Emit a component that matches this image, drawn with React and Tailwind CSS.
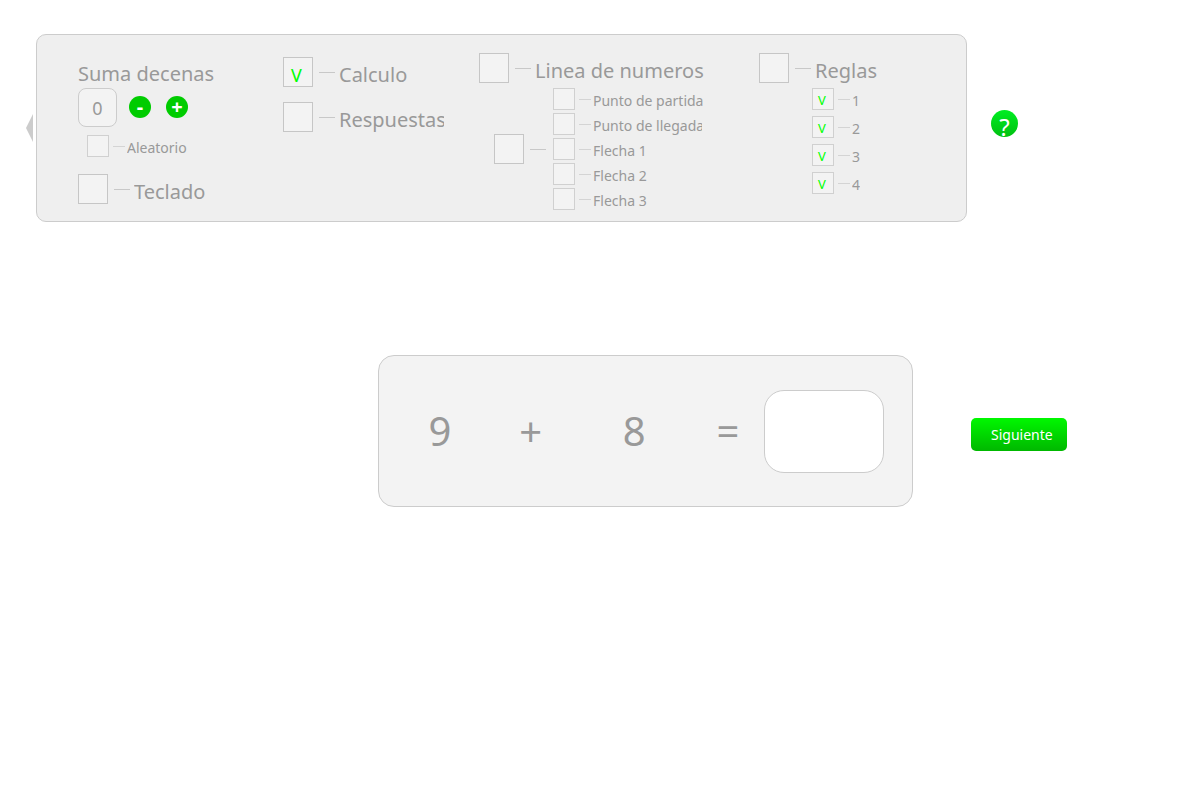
import React, { useState } from "react";

function Option({ label, small = false, checked = false, hideLabel = false, textClass = "" }) {
  const [on, setOn] = useState(checked);
  return (
    <label className={small ? "flex h-[22px] items-center" : "flex h-[30px] items-center"}>
      <span className={small ? "relative h-[22px] w-[22px] shrink-0" : "relative h-[30px] w-[30px] shrink-0"}>
        <input
          type="checkbox"
          aria-label={label}
          checked={on}
          onChange={() => setOn(!on)}
          className={
            small
              ? "block h-full w-full appearance-none border border-[#d0d0d0] bg-[#f3f3f3]"
              : "block h-full w-full appearance-none border border-[#c6c6c6] bg-[#f3f3f3]"
          }
        />
        {on && (
          <span
            aria-hidden="true"
            className={
              small
                ? "pointer-events-none absolute left-[6px] top-1 text-[13px] leading-[16px] text-[#00ff00]"
                : "pointer-events-none absolute left-[8px] top-[8px] text-[18px] leading-[20px] text-[#00ff00]"
            }
          >
            V
          </span>
        )}
      </span>
      <span className={small ? "ml-1 mr-[2px] h-px w-3 shrink-0 bg-[#d4d4d4]" : "ml-[6px] mr-1 h-px w-4 shrink-0 bg-[#c8c8c8]"} />
      {!hideLabel && (
        <span
          className={`${small ? "pt-[3px] text-[14px] leading-5" : "pt-[6px] text-[20px] leading-7"} overflow-hidden whitespace-nowrap ${textClass}`}
        >
          {label}
        </span>
      )}
    </label>
  );
}

function TensPicker() {
  const [tens, setTens] = useState(0);
  const round =
    "flex h-[22px] w-[22px] items-center justify-center rounded-full bg-[#00cc00] text-[20px] font-bold leading-5 text-white";
  return (
    <div className="flex flex-col items-start pt-[25px]">
      <h2 className="text-[20px] leading-7">Suma decenas</h2>
      <div className="flex items-center">
        <output className="flex h-[39px] w-[39px] items-center justify-center rounded-lg border border-[#cccccc] bg-[#f3f3f3] text-[18px] leading-6">
          {tens}
        </output>
        <div className="ml-3 flex gap-[15px] pb-[2px]">
          <button type="button" aria-label="Restar" onClick={() => setTens(Math.max(0, tens - 1))} className={round}>
            -
          </button>
          <button type="button" aria-label="Sumar" onClick={() => setTens(tens + 1)} className={round}>
            +
          </button>
        </div>
      </div>
      <div className="ml-[9px] mt-2">
        <Option small label="Aleatorio" />
      </div>
      <div className="mt-[17px]">
        <Option label="Teclado" />
      </div>
    </div>
  );
}

function Settings() {
  return (
    <header className="flex items-center pl-[26px] pr-[182px]">
      <button type="button" aria-label="Ocultar opciones" className="mr-[3px] shrink-0">
        <svg width="7" height="28" viewBox="0 0 7 28" className="block">
          <path d="M7 0V28L0 14Z" fill="#cccccc" />
        </svg>
      </button>
      <section className="grid min-h-[188px] flex-1 grid-cols-[205px_196px_280px_1fr] rounded-[10px] border border-[#cccccc] bg-[#efefef] pl-[41px]">
        <TensPicker />
        <div className="flex flex-col gap-[15px] pt-[22px]">
          <Option label="Calculo" checked />
          <Option label="Respuestas" textClass="w-[105px]" />
        </div>
        <div className="flex flex-col pt-[18px]">
          <Option label="Linea de numeros" />
          <div className="ml-[15px] mt-[5px] flex items-center">
            <Option label="Todos los pasos" hideLabel />
            <div className="ml-[3px] flex flex-col gap-[3px]">
              <Option small label="Punto de partida" textClass="w-[111px]" />
              <Option small label="Punto de llegada" textClass="w-[109px]" />
              <Option small label="Flecha 1" />
              <Option small label="Flecha 2" />
              <Option small label="Flecha 3" />
            </div>
          </div>
        </div>
        <div className="flex flex-col pt-[18px]">
          <Option label="Reglas" />
          <div className="ml-[53px] mt-[5px] flex flex-col gap-[6px]">
            <Option small label="1" checked />
            <Option small label="2" checked />
            <Option small label="3" checked />
            <Option small label="4" checked />
          </div>
        </div>
      </section>
      <button
        type="button"
        className="mb-[10px] ml-6 flex h-[27px] w-[27px] shrink-0 items-start justify-center overflow-hidden rounded-full bg-linear-to-b from-[#00ee22] to-[#00c011] pt-[3px] text-[24px] leading-7 text-white"
      >
        ?
      </button>
    </header>
  );
}

function Exercise() {
  return (
    <main className="mt-[133px] flex items-center gap-[58px] pl-[378px] pr-[133px]">
      <section className="grid h-[152px] flex-1 grid-cols-[120fr_62fr_146fr_42fr_135px] items-center rounded-2xl border border-[#cccccc] bg-[#f3f3f3] pl-px pr-7 text-center text-[40px] leading-[48px]">
        <span>9</span>
        <span>+</span>
        <span>8</span>
        <span>=</span>
        <input
          type="text"
          aria-label="Resultado"
          className="ml-[15px] h-[83px] w-[120px] rounded-[20px] border border-[#cccccc] bg-white text-center outline-none"
        />
      </section>
      <button
        type="button"
        className="mt-[7px] h-[33px] w-24 shrink-0 rounded-[5px] bg-linear-to-b from-[#00f800] to-[#00b800] pl-5 text-left text-[14px] leading-5 text-white"
      >
        Siguiente
      </button>
    </main>
  );
}

export default function App() {
  return (
    <div className="min-h-screen bg-white pt-[34px] font-['Noto_Sans',sans-serif] text-[#999999]">
      <Settings />
      <Exercise />
    </div>
  );
}
